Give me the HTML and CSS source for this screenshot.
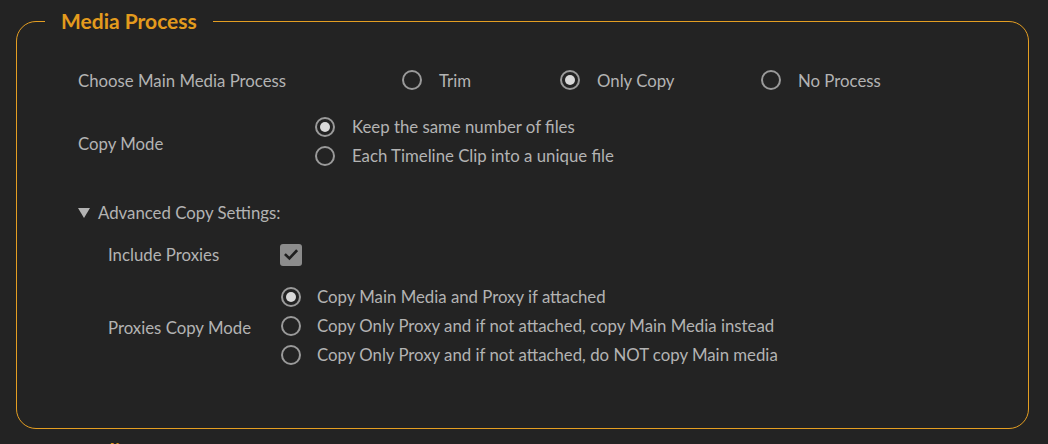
FILE: index.html
```html
<!DOCTYPE html>
<html>
<head>
<meta charset="utf-8">
<link rel="stylesheet" href="styles.css">
</head>
<body>
<fieldset class="panel">
  <legend class="panel-title">Media Process</legend>

  <div class="row row-main">
    <div class="label label-main">Choose Main Media Process</div>
    <div class="choice choice-trim"><span class="radio"></span><span>Trim</span></div>
    <div class="choice choice-copy"><span class="radio checked"></span><span>Only Copy</span></div>
    <div class="choice"><span class="radio"></span><span>No Process</span></div>
  </div>

  <div class="row row-copy">
    <div class="label label-copy">Copy Mode</div>
    <div class="group">
      <div class="choice"><span class="radio checked"></span><span>Keep the same number of files</span></div>
      <div class="choice"><span class="radio"></span><span>Each Timeline Clip into a unique file</span></div>
    </div>
  </div>

  <div class="advanced"><span class="triangle"></span><span>Advanced Copy Settings:</span></div>

  <div class="sub">
    <div class="row row-include">
      <div class="label label-sub">Include Proxies</div>
      <span class="checkbox">
        <svg width="14" height="12" viewBox="0 0 14 12"><path d="M1.8 6 L5.4 9.4 L12.2 2.2" fill="none" stroke="#1e1e1e" stroke-width="2.6" stroke-linecap="square"/></svg>
      </span>
    </div>
    <div class="row row-proxies">
      <div class="label label-sub label-proxies">Proxies Copy Mode</div>
      <div class="group">
        <div class="choice"><span class="radio checked"></span><span>Copy Main Media and Proxy if attached</span></div>
        <div class="choice"><span class="radio"></span><span>Copy Only Proxy and if not attached, copy Main Media instead</span></div>
        <div class="choice"><span class="radio"></span><span>Copy Only Proxy and if not attached, do NOT copy Main media</span></div>
      </div>
    </div>
  </div>
</fieldset>
<div class="next-title">Media</div>
</body>
</html>
```
FILE: styles.css
```css
html, body {
  margin: 0;
  padding: 0;
  background: #232323;
  height: 444px;
  overflow: hidden;
}
body {
  font-family: Lato, "Liberation Sans", sans-serif;
  font-size: 16.8px;
  color: #b3b3b3;
  padding: 0 19px 0 16px;
}
.panel {
  margin: 9px 0 0 0;
  border: 1px solid #e49e22;
  border-radius: 20px;
  padding: 0 0 0 61px;
  height: 418px;
  box-sizing: content-box;
  min-width: 0;
}
.panel-title {
  margin-left: -33px;
  padding: 0 16px;
  font-size: 21px;
  font-weight: bold;
  line-height: 24px;
  color: #e39b1d;
}
.row {
  display: flex;
  align-items: center;
}
.row-main {
  margin-top: 32px;
  height: 30px;
}
.label-main { width: 324px; }
.choice {
  display: flex;
  align-items: center;
  height: 29px;
}
.choice-trim { width: 158px; }
.choice-copy { width: 201px; }
.radio {
  width: 16px;
  height: 16px;
  border: 2px solid #9a9a9a;
  border-radius: 50%;
  margin-right: 17px;
  flex: none;
  position: relative;
  box-sizing: content-box;
}
.radio.checked::after {
  content: "";
  position: absolute;
  left: 3px;
  top: 3px;
  width: 10px;
  height: 10px;
  border-radius: 50%;
  background: #d9d9d9;
}
.row-copy {
  margin-top: 17px;
}
.label-copy {
  width: 237px;
  padding-top: 4px;
}
.advanced {
  margin-top: 28px;
  height: 29px;
  display: flex;
  align-items: center;
}
.triangle {
  width: 0;
  height: 0;
  border-left: 6px solid transparent;
  border-right: 6px solid transparent;
  border-top: 10px solid #b3b3b3;
  margin-right: 8px;
}
.sub {
  padding-left: 30px;
}
.row-include {
  margin-top: 13px;
  height: 29px;
}
.label-sub { width: 172px; }
.checkbox {
  width: 22px;
  height: 22px;
  border-radius: 3px;
  background: #8c8c8c;
  display: flex;
  align-items: center;
  justify-content: center;
}
.row-proxies {
  margin-top: 13px;
}
.row-proxies .radio { margin-right: 16px; }
.label-proxies { width: 173px; padding-top: 4px; }
.next-title {
  margin: 9px 0 0 56px;
  font-size: 21px;
  font-weight: bold;
  color: #e39b1d;
}
```
